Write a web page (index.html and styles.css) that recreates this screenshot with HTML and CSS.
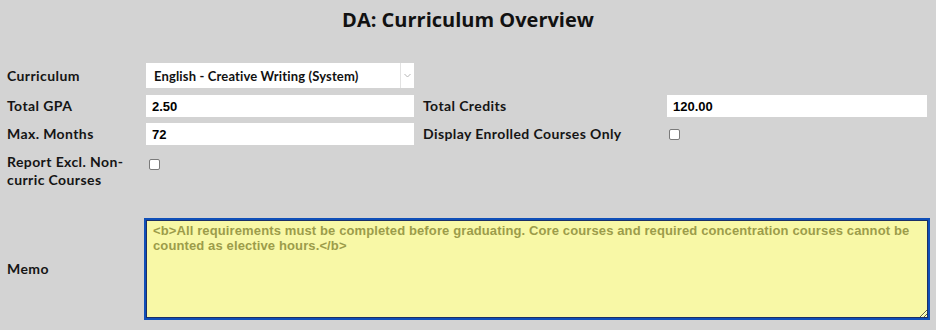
FILE: index.html
```html
<!DOCTYPE html>
<html lang="en">
<head>
    <meta charset="UTF-8">
    <meta name="viewport" content="width=device-width, initial-scale=1.0">
    <title>DA: Curriculum Overview</title>
    <link rel="stylesheet" href="styles.css">
</head>
<body>
    <h1>DA: Curriculum Overview</h1>

    <div class="form-grid">
        <label class="field-label" for="curriculum">Curriculum</label>
        <div class="select-box">
            <select id="curriculum">
                <option>English - Creative Writing (System)</option>
            </select>
            <span class="select-arrow">
                <svg width="7" height="5" viewBox="0 0 7 5"><polyline points="0.5,1 3.5,4 6.5,1" fill="none" stroke="#b5b5b5" stroke-width="1"/></svg>
            </span>
        </div>
        <div class="empty"></div>
        <div class="empty"></div>

        <label class="field-label" for="gpa">Total GPA</label>
        <input type="text" id="gpa" value="2.50">
        <label class="field-label right" for="credits">Total Credits</label>
        <input type="text" id="credits" value="120.00">

        <label class="field-label" for="months">Max. Months</label>
        <input type="text" id="months" value="72">
        <label class="field-label right" for="enrolled">Display Enrolled Courses Only</label>
        <div class="check-cell"><input type="checkbox" id="enrolled"></div>

        <label class="field-label two-line" for="excl">Report Excl. Non-curric Courses</label>
        <div class="check-cell top"><input type="checkbox" id="excl"></div>
        <div class="empty"></div>
        <div class="empty"></div>
    </div>

    <div class="memo-row">
        <label class="field-label" for="memo">Memo</label>
        <textarea id="memo">&lt;b&gt;All requirements must be completed before graduating. Core courses and required concentration courses cannot be counted as elective hours.&lt;/b&gt;</textarea>
    </div>
</body>
</html>
```

FILE: styles.css
```css
body {
    margin: 0;
    padding: 0 7px;
    background-color: #d3d3d3;
    font-family: Lato, "Noto Sans", sans-serif;
    color: #151515;
}
h1 {
    margin: 6px 0 30px;
    font-family: "Open Sans", sans-serif;
    font-size: 20px;
    font-weight: 700;
    line-height: 27px;
    text-align: center;
    color: #111;
}
.form-grid {
    display: grid;
    grid-template-columns: 139px 268px 253px 260px;
    grid-template-rows: 26px 22px 22px auto;
    row-gap: 6px;
    align-items: center;
}
.field-label {
    font-size: 14px;
    font-weight: 700;
    letter-spacing: 0.4px;
    line-height: 16px;
    padding-right: 10px;
}
.field-label.right {
    padding-left: 9px;
}
.field-label.two-line {
    align-self: start;
    line-height: 18px;
    padding-top: 2px;
}
.select-box {
    display: flex;
    height: 25px;
    align-self: start;
    background: #fff;
}
.select-box select {
    flex: 1;
    appearance: none;
    border: none;
    background: transparent;
    padding: 0 0 0 8px;
    font-family: Lato, "Noto Sans", sans-serif;
    font-size: 13px;
    font-weight: 700;
    letter-spacing: 0.15px;
    color: #111;
    outline: none;
}
.select-arrow {
    width: 13px;
    border-left: 1px solid #e2e2e2;
    display: flex;
    align-items: center;
    justify-content: center;
}
input[type="text"] {
    box-sizing: border-box;
    height: 22px;
    width: 100%;
    margin: 0;
    border: none;
    padding: 0 6px;
    background: #fff;
    font-family: "Liberation Sans", Arial, sans-serif;
    font-size: 13px;
    font-weight: 700;
    color: #000;
}
.check-cell {
    display: flex;
    padding-left: 2px;
}
.check-cell.top {
    align-self: start;
    padding-left: 3px;
    padding-top: 8px;
}
input[type="checkbox"] {
    appearance: none;
    width: 11px;
    height: 11px;
    margin: 0;
    border: 1px solid #7a7a7a;
    border-radius: 2px;
    background: #fff;
}
.memo-row {
    display: grid;
    grid-template-columns: 137px 786px;
    align-items: center;
    margin-top: 29px;
}
.memo-row textarea {
    box-sizing: border-box;
    height: 102px;
    margin: 0;
    padding: 3px 7px;
    border: 2px solid #0f4fb8;
    box-shadow: inset 0 0 0 1px #1b2f66;
    background: #f8f8a6;
    font-family: "Liberation Sans", Arial, sans-serif;
    font-size: 13px;
    font-weight: 700;
    letter-spacing: 0.12px;
    line-height: 15px;
    color: #9c9c4a;
    resize: both;
    outline: none;
}
```
